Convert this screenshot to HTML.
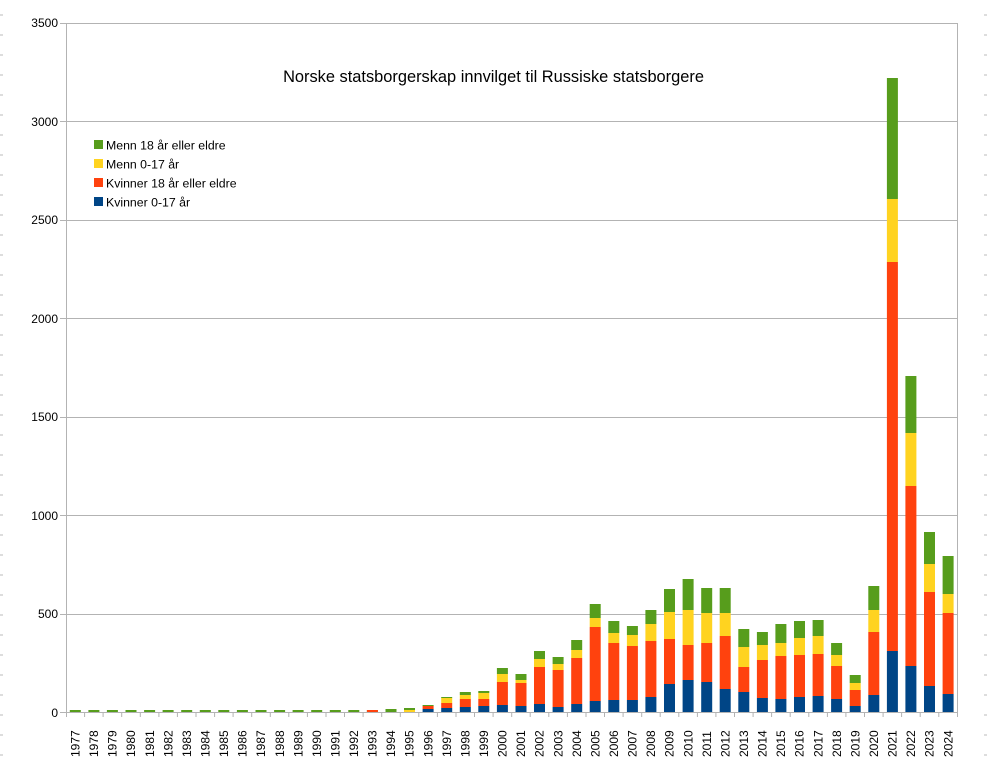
<!DOCTYPE html>
<html><head><meta charset="utf-8"><style>
html,body{margin:0;padding:0;background:#fff;}
svg{display:block;font-family:"Liberation Sans",sans-serif;}
</style></head><body>
<svg width="987" height="767" viewBox="0 0 987 767" xmlns="http://www.w3.org/2000/svg">
<defs>
<pattern id="tk" width="4" height="20" patternUnits="userSpaceOnUse" y="5"><line x1="0" y1="10" x2="3" y2="10" stroke="#bbb" stroke-width="1"/></pattern>
</defs>
<rect x="0" y="0" width="4" height="767" fill="url(#tk)"/>
<rect x="983" y="0" width="4" height="767" fill="url(#tk)"/>
<g stroke="#b3b3b3" stroke-width="1">
<line x1="60" y1="23.5" x2="957" y2="23.5"/>
<line x1="60" y1="121.5" x2="957" y2="121.5"/>
<line x1="60" y1="220.5" x2="957" y2="220.5"/>
<line x1="60" y1="318.5" x2="957" y2="318.5"/>
<line x1="60" y1="417.5" x2="957" y2="417.5"/>
<line x1="60" y1="515.5" x2="957" y2="515.5"/>
<line x1="60" y1="614.5" x2="957" y2="614.5"/>
<line x1="60" y1="712.5" x2="957" y2="712.5"/>
<line x1="66.5" y1="23" x2="66.5" y2="717"/>
<line x1="957.5" y1="23" x2="957.5" y2="717"/>
</g>
<g font-size="12" fill="#000" text-anchor="end">
<text x="58" y="27">3500</text><text x="58" y="126">3000</text><text x="58" y="224">2500</text>
<text x="58" y="323">2000</text><text x="58" y="421">1500</text><text x="58" y="520">1000</text>
<text x="58" y="618">500</text><text x="58" y="717">0</text>
</g>
<text x="493.5" y="82" font-size="16.4" text-anchor="middle">Norske statsborgerskap innvilget til Russiske statsborgere</text>
<g font-size="12.3">
<rect x="94" y="140" width="9" height="9" fill="#579d1c"/><text x="106" y="149.5">Menn 18 år eller eldre</text>
<rect x="94" y="159" width="9" height="9" fill="#ffd320"/><text x="106" y="168.5">Menn 0-17 år</text>
<rect x="94" y="178" width="9" height="9" fill="#ff420e"/><text x="106" y="187.5">Kvinner 18 år eller eldre</text>
<rect x="94" y="197" width="9" height="9" fill="#004586"/><text x="106" y="206.5">Kvinner 0-17 år</text>
</g>
<g fill="#579d1c">
<rect x="69.8" y="710" width="11" height="2"/><rect x="88.4" y="710" width="11" height="2"/><rect x="106.9" y="710" width="11" height="2"/><rect x="125.5" y="710" width="11" height="2"/><rect x="144.1" y="710" width="11" height="2"/><rect x="162.6" y="710" width="11" height="2"/><rect x="181.2" y="710" width="11" height="2"/><rect x="199.8" y="710" width="11" height="2"/><rect x="218.3" y="710" width="11" height="2"/><rect x="236.9" y="710" width="11" height="2"/><rect x="255.5" y="710" width="11" height="2"/><rect x="274.1" y="710" width="11" height="2"/><rect x="292.6" y="710" width="11" height="2"/><rect x="311.2" y="710" width="11" height="2"/><rect x="329.8" y="710" width="11" height="2"/><rect x="348.3" y="710" width="11" height="2"/><rect x="366.9" y="710" width="11" height="2"/><rect x="385.5" y="709" width="11" height="3"/><rect x="404" y="708" width="11" height="2"/>
</g>
<rect x="366.9" y="710" width="11" height="2" fill="#ff420e"/>
<rect x="404" y="710" width="11" height="2" fill="#ffd320"/>
<g id="bars">
<g transform="translate(428.1,0)"><rect x="-5.5" y="705" width="11" height="1" fill="#579d1c"/><rect x="-5.5" y="706" width="11" height="3" fill="#ff420e"/><rect x="-5.5" y="709" width="11" height="3" fill="#004586"/></g>
<g transform="translate(446.7,0)"><rect x="-5.5" y="697" width="11" height="1" fill="#579d1c"/><rect x="-5.5" y="698" width="11" height="5" fill="#ffd320"/><rect x="-5.5" y="703" width="11" height="5" fill="#ff420e"/><rect x="-5.5" y="708" width="11" height="4" fill="#004586"/></g>
<g transform="translate(465.3,0)"><rect x="-5.5" y="692" width="11" height="3" fill="#579d1c"/><rect x="-5.5" y="695" width="11" height="4" fill="#ffd320"/><rect x="-5.5" y="699" width="11" height="8" fill="#ff420e"/><rect x="-5.5" y="707" width="11" height="5" fill="#004586"/></g>
<g transform="translate(483.8,0)"><rect x="-5.5" y="691" width="11" height="2" fill="#579d1c"/><rect x="-5.5" y="693" width="11" height="6" fill="#ffd320"/><rect x="-5.5" y="699" width="11" height="7" fill="#ff420e"/><rect x="-5.5" y="706" width="11" height="6" fill="#004586"/></g>
<g transform="translate(502.4,0)"><rect x="-5.5" y="668" width="11" height="6" fill="#579d1c"/><rect x="-5.5" y="674" width="11" height="8" fill="#ffd320"/><rect x="-5.5" y="682" width="11" height="23" fill="#ff420e"/><rect x="-5.5" y="705" width="11" height="7" fill="#004586"/></g>
<g transform="translate(521,0)"><rect x="-5.5" y="674" width="11" height="6" fill="#579d1c"/><rect x="-5.5" y="680" width="11" height="3" fill="#ffd320"/><rect x="-5.5" y="683" width="11" height="23" fill="#ff420e"/><rect x="-5.5" y="706" width="11" height="6" fill="#004586"/></g>
<g transform="translate(539.5,0)"><rect x="-5.5" y="651" width="11" height="8" fill="#579d1c"/><rect x="-5.5" y="659" width="11" height="8" fill="#ffd320"/><rect x="-5.5" y="667" width="11" height="37" fill="#ff420e"/><rect x="-5.5" y="704" width="11" height="8" fill="#004586"/></g>
<g transform="translate(558.1,0)"><rect x="-5.5" y="657" width="11" height="7" fill="#579d1c"/><rect x="-5.5" y="664" width="11" height="6" fill="#ffd320"/><rect x="-5.5" y="670" width="11" height="37" fill="#ff420e"/><rect x="-5.5" y="707" width="11" height="5" fill="#004586"/></g>
<g transform="translate(576.7,0)"><rect x="-5.5" y="640" width="11" height="10" fill="#579d1c"/><rect x="-5.5" y="650" width="11" height="8" fill="#ffd320"/><rect x="-5.5" y="658" width="11" height="46" fill="#ff420e"/><rect x="-5.5" y="704" width="11" height="8" fill="#004586"/></g>
<g transform="translate(595.2,0)"><rect x="-5.5" y="604" width="11" height="14" fill="#579d1c"/><rect x="-5.5" y="618" width="11" height="9" fill="#ffd320"/><rect x="-5.5" y="627" width="11" height="74" fill="#ff420e"/><rect x="-5.5" y="701" width="11" height="11" fill="#004586"/></g>
<g transform="translate(613.8,0)"><rect x="-5.5" y="621" width="11" height="12" fill="#579d1c"/><rect x="-5.5" y="633" width="11" height="10" fill="#ffd320"/><rect x="-5.5" y="643" width="11" height="57" fill="#ff420e"/><rect x="-5.5" y="700" width="11" height="12" fill="#004586"/></g>
<g transform="translate(632.4,0)"><rect x="-5.5" y="626" width="11" height="9" fill="#579d1c"/><rect x="-5.5" y="635" width="11" height="11" fill="#ffd320"/><rect x="-5.5" y="646" width="11" height="54" fill="#ff420e"/><rect x="-5.5" y="700" width="11" height="12" fill="#004586"/></g>
<g transform="translate(650.9,0)"><rect x="-5.5" y="610" width="11" height="14" fill="#579d1c"/><rect x="-5.5" y="624" width="11" height="17" fill="#ffd320"/><rect x="-5.5" y="641" width="11" height="56" fill="#ff420e"/><rect x="-5.5" y="697" width="11" height="15" fill="#004586"/></g>
<g transform="translate(669.5,0)"><rect x="-5.5" y="589" width="11" height="23" fill="#579d1c"/><rect x="-5.5" y="612" width="11" height="27" fill="#ffd320"/><rect x="-5.5" y="639" width="11" height="45" fill="#ff420e"/><rect x="-5.5" y="684" width="11" height="28" fill="#004586"/></g>
<g transform="translate(688.1,0)"><rect x="-5.5" y="579" width="11" height="31" fill="#579d1c"/><rect x="-5.5" y="610" width="11" height="35" fill="#ffd320"/><rect x="-5.5" y="645" width="11" height="35" fill="#ff420e"/><rect x="-5.5" y="680" width="11" height="32" fill="#004586"/></g>
<g transform="translate(706.7,0)"><rect x="-5.5" y="588" width="11" height="25" fill="#579d1c"/><rect x="-5.5" y="613" width="11" height="30" fill="#ffd320"/><rect x="-5.5" y="643" width="11" height="39" fill="#ff420e"/><rect x="-5.5" y="682" width="11" height="30" fill="#004586"/></g>
<g transform="translate(725.2,0)"><rect x="-5.5" y="588" width="11" height="25" fill="#579d1c"/><rect x="-5.5" y="613" width="11" height="23" fill="#ffd320"/><rect x="-5.5" y="636" width="11" height="53" fill="#ff420e"/><rect x="-5.5" y="689" width="11" height="23" fill="#004586"/></g>
<g transform="translate(743.8,0)"><rect x="-5.5" y="629" width="11" height="18" fill="#579d1c"/><rect x="-5.5" y="647" width="11" height="20" fill="#ffd320"/><rect x="-5.5" y="667" width="11" height="25" fill="#ff420e"/><rect x="-5.5" y="692" width="11" height="20" fill="#004586"/></g>
<g transform="translate(762.4,0)"><rect x="-5.5" y="632" width="11" height="13" fill="#579d1c"/><rect x="-5.5" y="645" width="11" height="15" fill="#ffd320"/><rect x="-5.5" y="660" width="11" height="38" fill="#ff420e"/><rect x="-5.5" y="698" width="11" height="14" fill="#004586"/></g>
<g transform="translate(780.9,0)"><rect x="-5.5" y="624" width="11" height="19" fill="#579d1c"/><rect x="-5.5" y="643" width="11" height="13" fill="#ffd320"/><rect x="-5.5" y="656" width="11" height="43" fill="#ff420e"/><rect x="-5.5" y="699" width="11" height="13" fill="#004586"/></g>
<g transform="translate(799.5,0)"><rect x="-5.5" y="621" width="11" height="17" fill="#579d1c"/><rect x="-5.5" y="638" width="11" height="17" fill="#ffd320"/><rect x="-5.5" y="655" width="11" height="42" fill="#ff420e"/><rect x="-5.5" y="697" width="11" height="15" fill="#004586"/></g>
<g transform="translate(818.1,0)"><rect x="-5.5" y="620" width="11" height="16" fill="#579d1c"/><rect x="-5.5" y="636" width="11" height="18" fill="#ffd320"/><rect x="-5.5" y="654" width="11" height="42" fill="#ff420e"/><rect x="-5.5" y="696" width="11" height="16" fill="#004586"/></g>
<g transform="translate(836.6,0)"><rect x="-5.5" y="643" width="11" height="12" fill="#579d1c"/><rect x="-5.5" y="655" width="11" height="11" fill="#ffd320"/><rect x="-5.5" y="666" width="11" height="33" fill="#ff420e"/><rect x="-5.5" y="699" width="11" height="13" fill="#004586"/></g>
<g transform="translate(855.2,0)"><rect x="-5.5" y="675" width="11" height="8" fill="#579d1c"/><rect x="-5.5" y="683" width="11" height="7" fill="#ffd320"/><rect x="-5.5" y="690" width="11" height="16" fill="#ff420e"/><rect x="-5.5" y="706" width="11" height="6" fill="#004586"/></g>
<g transform="translate(873.8,0)"><rect x="-5.5" y="586" width="11" height="24" fill="#579d1c"/><rect x="-5.5" y="610" width="11" height="22" fill="#ffd320"/><rect x="-5.5" y="632" width="11" height="63" fill="#ff420e"/><rect x="-5.5" y="695" width="11" height="17" fill="#004586"/></g>
<g transform="translate(892.4,0)"><rect x="-5.5" y="78" width="11" height="121" fill="#579d1c"/><rect x="-5.5" y="199" width="11" height="63" fill="#ffd320"/><rect x="-5.5" y="262" width="11" height="389" fill="#ff420e"/><rect x="-5.5" y="651" width="11" height="61" fill="#004586"/></g>
<g transform="translate(910.9,0)"><rect x="-5.5" y="376" width="11" height="57" fill="#579d1c"/><rect x="-5.5" y="433" width="11" height="53" fill="#ffd320"/><rect x="-5.5" y="486" width="11" height="180" fill="#ff420e"/><rect x="-5.5" y="666" width="11" height="46" fill="#004586"/></g>
<g transform="translate(929.5,0)"><rect x="-5.5" y="532" width="11" height="32" fill="#579d1c"/><rect x="-5.5" y="564" width="11" height="28" fill="#ffd320"/><rect x="-5.5" y="592" width="11" height="94" fill="#ff420e"/><rect x="-5.5" y="686" width="11" height="26" fill="#004586"/></g>
<g transform="translate(948.1,0)"><rect x="-5.5" y="556" width="11" height="38" fill="#579d1c"/><rect x="-5.5" y="594" width="11" height="19" fill="#ffd320"/><rect x="-5.5" y="613" width="11" height="81" fill="#ff420e"/><rect x="-5.5" y="694" width="11" height="18" fill="#004586"/></g>
</g>
<g stroke="#b3b3b3" stroke-width="1">
<path d="M84.6 712v5M103.1 712v5M121.7 712v5M140.3 712v5M158.9 712v5M177.4 712v5M196 712v5M214.6 712v5M233.1 712v5M251.7 712v5M270.3 712v5M288.8 712v5M307.4 712v5M326 712v5M344.5 712v5M363.1 712v5M381.7 712v5M400.3 712v5M418.8 712v5M437.4 712v5M456 712v5M474.5 712v5M493.1 712v5M511.7 712v5M530.2 712v5M548.8 712v5M567.4 712v5M586 712v5M604.5 712v5M623.1 712v5M641.7 712v5M660.2 712v5M678.8 712v5M697.4 712v5M715.9 712v5M734.5 712v5M753.1 712v5M771.6 712v5M790.2 712v5M808.8 712v5M827.4 712v5M845.9 712v5M864.5 712v5M883.1 712v5M901.6 712v5M920.2 712v5M938.8 712v5"/>
</g>
<g font-size="12" fill="#000">
<text transform="translate(79.5,757) rotate(-90)">1977</text>
<text transform="translate(98.1,757) rotate(-90)">1978</text>
<text transform="translate(116.6,757) rotate(-90)">1979</text>
<text transform="translate(135.2,757) rotate(-90)">1980</text>
<text transform="translate(153.8,757) rotate(-90)">1981</text>
<text transform="translate(172.3,757) rotate(-90)">1982</text>
<text transform="translate(190.9,757) rotate(-90)">1983</text>
<text transform="translate(209.5,757) rotate(-90)">1984</text>
<text transform="translate(228,757) rotate(-90)">1985</text>
<text transform="translate(246.6,757) rotate(-90)">1986</text>
<text transform="translate(265.2,757) rotate(-90)">1987</text>
<text transform="translate(283.8,757) rotate(-90)">1988</text>
<text transform="translate(302.3,757) rotate(-90)">1989</text>
<text transform="translate(320.9,757) rotate(-90)">1990</text>
<text transform="translate(339.5,757) rotate(-90)">1991</text>
<text transform="translate(358,757) rotate(-90)">1992</text>
<text transform="translate(376.6,757) rotate(-90)">1993</text>
<text transform="translate(395.2,757) rotate(-90)">1994</text>
<text transform="translate(413.7,757) rotate(-90)">1995</text>
<text transform="translate(432.3,757) rotate(-90)">1996</text>
<text transform="translate(450.9,757) rotate(-90)">1997</text>
<text transform="translate(469.5,757) rotate(-90)">1998</text>
<text transform="translate(488,757) rotate(-90)">1999</text>
<text transform="translate(506.6,757) rotate(-90)">2000</text>
<text transform="translate(525.2,757) rotate(-90)">2001</text>
<text transform="translate(543.7,757) rotate(-90)">2002</text>
<text transform="translate(562.3,757) rotate(-90)">2003</text>
<text transform="translate(580.9,757) rotate(-90)">2004</text>
<text transform="translate(599.4,757) rotate(-90)">2005</text>
<text transform="translate(618,757) rotate(-90)">2006</text>
<text transform="translate(636.6,757) rotate(-90)">2007</text>
<text transform="translate(655.1,757) rotate(-90)">2008</text>
<text transform="translate(673.7,757) rotate(-90)">2009</text>
<text transform="translate(692.3,757) rotate(-90)">2010</text>
<text transform="translate(710.9,757) rotate(-90)">2011</text>
<text transform="translate(729.4,757) rotate(-90)">2012</text>
<text transform="translate(748,757) rotate(-90)">2013</text>
<text transform="translate(766.6,757) rotate(-90)">2014</text>
<text transform="translate(785.1,757) rotate(-90)">2015</text>
<text transform="translate(803.7,757) rotate(-90)">2016</text>
<text transform="translate(822.3,757) rotate(-90)">2017</text>
<text transform="translate(840.8,757) rotate(-90)">2018</text>
<text transform="translate(859.4,757) rotate(-90)">2019</text>
<text transform="translate(878,757) rotate(-90)">2020</text>
<text transform="translate(896.6,757) rotate(-90)">2021</text>
<text transform="translate(915.1,757) rotate(-90)">2022</text>
<text transform="translate(933.7,757) rotate(-90)">2023</text>
<text transform="translate(952.3,757) rotate(-90)">2024</text>
</g>
</svg>
</body></html>
